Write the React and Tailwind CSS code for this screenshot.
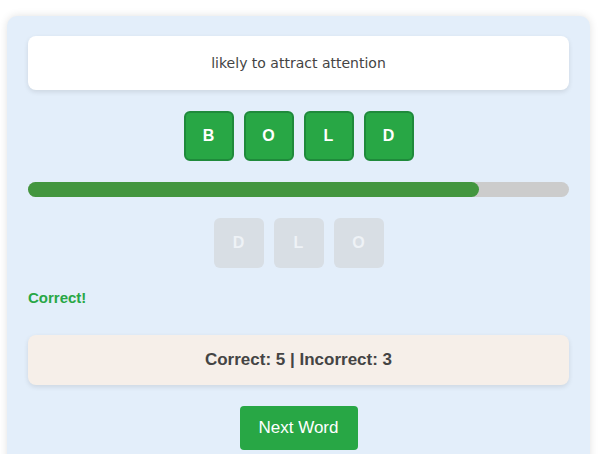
const word = ['B', 'O', 'L', 'D'];
const scrambled = ['D', 'L', 'O'];

export default function App() {
  const progress = (5 / 6) * 100;

  return (
    <div className="min-h-screen bg-white pt-4" style={{ fontFamily: '"Liberation Sans", Arial, sans-serif' }}>
      <div className="ml-[7px] w-[583px] rounded-[10px] bg-[#e3eefa] px-[21px] pt-5 pb-6 shadow-[0_0_8px_rgba(0,0,0,0.12)]">
        <div className="flex h-[54px] items-center justify-center rounded-lg bg-white text-[14px] text-[#444] shadow-[0_2px_5px_rgba(0,0,0,0.1)] font-['DejaVu_Sans',sans-serif]">
          likely to attract attention
        </div>

        <div className="mt-[21px] flex justify-center gap-[10px]">
          {word.map((l, i) => (
            <div
              key={i}
              className="flex h-[50px] w-[50px] items-center justify-center rounded-[6px] border-2 border-[#1f8a3b] bg-[#28a745] text-base font-bold text-white"
            >
              {l}
            </div>
          ))}
        </div>

        <div className="mt-[21px] h-[15px] w-full rounded-full bg-[#cccccc]">
          <div className="h-full rounded-full bg-[#43963f]" style={{ width: `${progress}%` }} />
        </div>

        <div className="mt-[21px] flex justify-center gap-[10px]">
          {scrambled.map((l, i) => (
            <div
              key={i}
              className="flex h-[50px] w-[50px] items-center justify-center rounded-[6px] bg-[#d8dee4] text-base font-bold text-[#eef2f6]"
            >
              {l}
            </div>
          ))}
        </div>

        <p className="mt-[19px] text-[15px] font-bold text-[#28a745]">Correct!</p>

        <div className="mt-[25px] flex h-[50px] items-center justify-center rounded-lg bg-[#f6efe9] text-[17px] font-bold text-[#444] shadow-[0_2px_5px_rgba(0,0,0,0.1)]">
          Correct: 5 | Incorrect: 3
        </div>

        <div className="mt-[21px] flex justify-center">
          <button className="h-[44px] w-[118px] rounded-[4px] bg-[#28a745] text-[17px] text-white">
            Next Word
          </button>
        </div>
      </div>
    </div>
  );
}
